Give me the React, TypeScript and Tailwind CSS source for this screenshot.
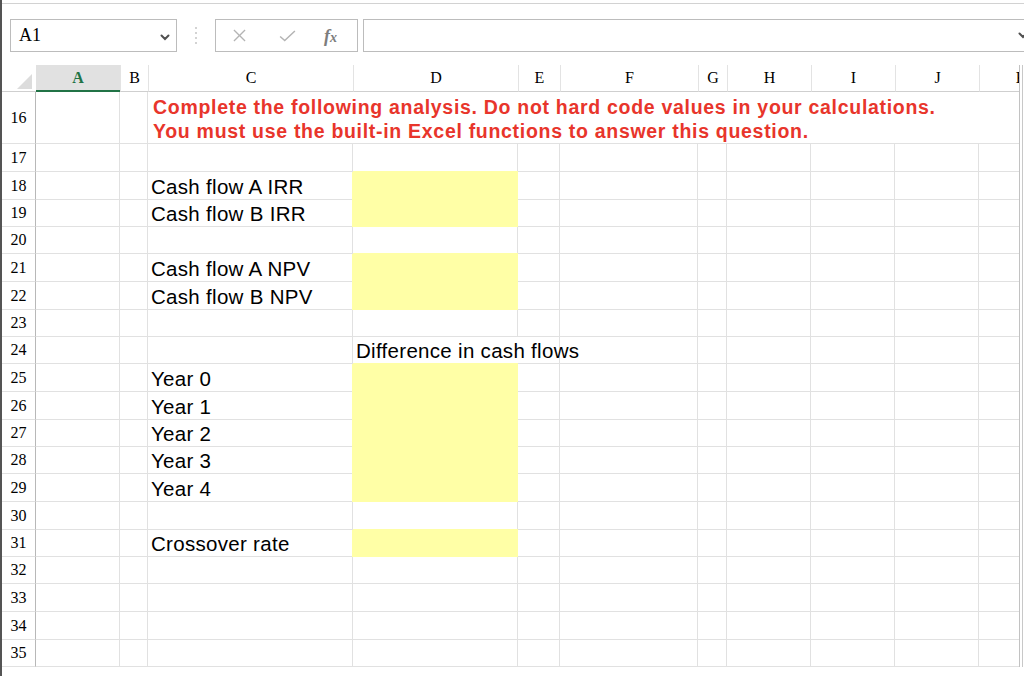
import React from "react";

// Excel sheet view: formula bar, column header, rows 16–35 of the worksheet.

const COLS = ["A", "B", "C", "D", "E", "F", "G", "H", "I", "J", "K"];
const gridCls =
  "grid grid-cols-[34px_84px_28px_205px_165px_42px_138px_29px_84px_84px_84px_84px] w-[1061px]";
const cellCls = "border-r border-b border-[#e1e1e1]";
const rowHeadCls =
  "flex items-center justify-center border-r border-b border-r-[#b8b8b8] border-b-[#e1e1e1] font-['Liberation_Serif',serif] text-[16px] text-black";
const labelCls =
  "flex items-end whitespace-nowrap pb-[2px] pl-[3px] text-[20.5px] leading-[20px] tracking-[0.3px] text-black";
const yellowCls =
  "bg-[#ffffa6] border-r border-b border-[#ffffa6] shadow-[0_-1px_0_#ffffa6,-1px_0_0_#ffffa6]";

type Row = { n: number; h: string; label?: string; yellow?: boolean; note?: string };

const ROWS: Row[] = [
  { n: 17, h: "h-[28px]" },
  { n: 18, h: "h-[28px]", label: "Cash flow A IRR", yellow: true },
  { n: 19, h: "h-[27px]", label: "Cash flow B IRR", yellow: true },
  { n: 20, h: "h-[27px]" },
  { n: 21, h: "h-[28px]", label: "Cash flow A NPV", yellow: true },
  { n: 22, h: "h-[28px]", label: "Cash flow B NPV", yellow: true },
  { n: 23, h: "h-[27px]" },
  { n: 24, h: "h-[27px]", note: "Difference in cash flows" },
  { n: 25, h: "h-[28px]", label: "Year 0", yellow: true },
  { n: 26, h: "h-[28px]", label: "Year 1", yellow: true },
  { n: 27, h: "h-[27px]", label: "Year 2", yellow: true },
  { n: 28, h: "h-[27px]", label: "Year 3", yellow: true },
  { n: 29, h: "h-[28px]", label: "Year 4", yellow: true },
  { n: 30, h: "h-[28px]" },
  { n: 31, h: "h-[27px]", label: "Crossover rate", yellow: true },
  { n: 32, h: "h-[27px]" },
  { n: 33, h: "h-[28px]" },
  { n: 34, h: "h-[28px]" },
  { n: 35, h: "h-[27px]" },
];

function Chevron({ className }: { className?: string }) {
  return (
    <svg viewBox="0 0 10 7" className={className} fill="none" stroke="currentColor" strokeWidth="2" strokeLinecap="round">
      <polyline points="1.5,1.5 5,5 8.5,1.5" />
    </svg>
  );
}

function FormulaBar() {
  return (
    <div className="mt-[15px] flex h-[33px] items-stretch pl-[8px]">
      <div className="flex w-[167px] items-center justify-between border border-[#bcbcbc] pl-[8px] pr-[6px]">
        <span className="font-['Liberation_Serif',serif] text-[18px] text-black">A1</span>
        <Chevron className="mt-[3px] h-[7px] w-[10px] text-[#505050]" />
      </div>
      <div className="flex w-[38px] flex-col items-center justify-center gap-[3px]">
        <span className="h-[2px] w-[2px] rounded-full bg-[#c4c4c4]" />
        <span className="h-[2px] w-[2px] rounded-full bg-[#c4c4c4]" />
        <span className="h-[2px] w-[2px] rounded-full bg-[#c4c4c4]" />
        <span className="h-[2px] w-[2px] rounded-full bg-[#c4c4c4]" />
      </div>
      <div className="flex w-[143px] items-center border border-[#bcbcbc] pl-[17px]">
        <svg viewBox="0 0 14 14" className="h-[13px] w-[13px] text-[#b4b4b4]" stroke="currentColor" strokeWidth="1.4">
          <line x1="1" y1="1" x2="13" y2="13" />
          <line x1="13" y1="1" x2="1" y2="13" />
        </svg>
        <svg viewBox="0 0 18 13" className="ml-[33px] h-[12px] w-[17px] text-[#b4b4b4]" fill="none" stroke="currentColor" strokeWidth="1.6">
          <polyline points="1,7 6,11.5 17,1" />
        </svg>
        <span className="ml-[28px] font-['Liberation_Serif',serif] text-[18px] font-bold italic leading-none text-[#7d7d7d]">
          f<span className="text-[14px]">x</span>
        </span>
      </div>
      <div className="ml-[5px] flex flex-1 items-center justify-end border border-r-0 border-[#bcbcbc]">
        <Chevron className="mr-[-4px] h-[7px] w-[10px] text-[#505050]" />
      </div>
    </div>
  );
}

function HeaderRow() {
  return (
    <div className={`${gridCls} h-[27px]`}>
      <div className="flex items-end justify-end border-b border-[#cfcfcf] pb-[2px] pr-[4px]">
        <svg viewBox="0 0 15 15" className="h-[15px] w-[15px]">
          <polygon points="15,0 15,15 0,15" fill="#dcdcdc" />
        </svg>
      </div>
      {COLS.map((c) =>
        c === "A" ? (
          <div
            key={c}
            className="flex items-center justify-center border-b-2 border-[#217346] bg-[#e1e1e1] font-['Liberation_Serif',serif] text-[16px] font-bold text-[#217346]"
          >
            {c}
          </div>
        ) : (
          <div
            key={c}
            className="flex items-center justify-center border-b border-l border-b-[#cfcfcf] border-l-[#e3e3e3] font-['Liberation_Serif',serif] text-[16px] text-black"
          >
            {c}
          </div>
        )
      )}
    </div>
  );
}

function NoteRow() {
  return (
    <div className={`${gridCls} h-[52px]`}>
      <div className={rowHeadCls}>16</div>
      <div className={cellCls} />
      <div className={cellCls} />
      <div className="col-span-9 flex flex-col justify-center border-b border-[#e1e1e1] pt-[4px] pl-[5px] text-[19.5px] font-bold leading-[23.5px] tracking-[0.7px] whitespace-nowrap text-[#e8352b]">
        <span>Complete the following analysis. Do not hard code values in your calculations.</span>
        <span>You must use the built-in Excel functions to answer this question.</span>
      </div>
    </div>
  );
}

function SheetRow({ row }: { row: Row }) {
  return (
    <div className={`${gridCls} ${row.h}`}>
      <div className={rowHeadCls}>{row.n}</div>
      <div className={cellCls} />
      <div className={cellCls} />
      <div className={`${cellCls} ${labelCls}`}>{row.label}</div>
      {row.note ? (
        <div className={`col-span-2 ${cellCls} ${labelCls}`}>{row.note}</div>
      ) : (
        <>
          <div className={row.yellow ? yellowCls : cellCls} />
          <div className={cellCls} />
        </>
      )}
      {["F", "G", "H", "I", "J", "K"].map((c) => (
        <div key={c} className={cellCls} />
      ))}
    </div>
  );
}

export default function App() {
  return (
    <div className="flex h-[676px] w-[1024px] overflow-hidden bg-white font-['Liberation_Sans',Arial,sans-serif]">
      <div className="w-[2px] shrink-0 bg-[#545454]" />
      <div className="flex min-w-0 flex-1 flex-col">
        <div className="h-[4px] border-b border-[#d2d2d2]" />
        <FormulaBar />
        <div className="mt-[13px] flex">
          <div className="w-[1018px] shrink-0 overflow-hidden border-r border-[#c2c2c2]">
            <HeaderRow />
            <NoteRow />
            {ROWS.map((r) => (
              <SheetRow key={r.n} row={r} />
            ))}
          </div>
          <div className="ml-[2px] w-px bg-[#c8c8c8]" />
        </div>
      </div>
    </div>
  );
}
